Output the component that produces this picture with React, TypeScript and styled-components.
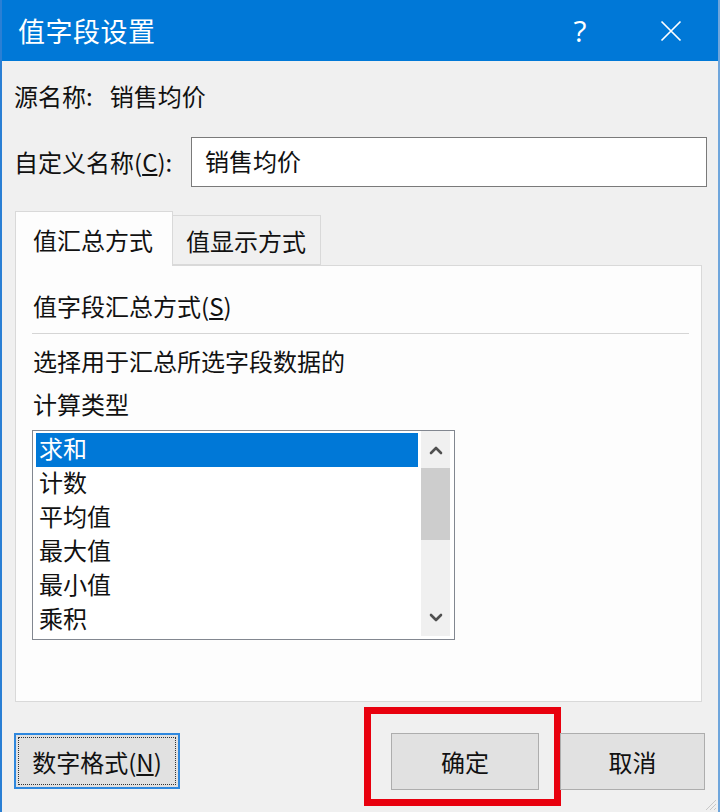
import React from "react";
import styled, { createGlobalStyle } from "styled-components";

const GlobalStyle = createGlobalStyle`
  *, *::before, *::after { box-sizing: border-box; }
  html, body { margin: 0; padding: 0; background: #f0f0f0; }
  body {
    font-family: "Noto Sans CJK SC", "Microsoft YaHei", "Noto Sans", sans-serif;
    color: #111111;
  }
`;

const Window = styled.div`
  position: relative;
  width: 720px;
  height: 812px;
  display: flex;
  flex-direction: column;
  background: #f0f0f0;
  border-left: 2px solid #2a7fd4;
  border-right: 2px solid #6fa6dc;
  overflow: hidden;
`;

const TitleBar = styled.div`
  height: 61px;
  flex: none;
  display: flex;
  align-items: center;
  justify-content: space-between;
  background: #0078d7;
  color: #ffffff;
  padding: 0 27px 0 16px;
`;

const Title = styled.div`
  font-size: 27px;
  line-height: 61px;
  letter-spacing: 0.5px;
`;

const TitleControls = styled.div`
  display: flex;
  align-items: center;
  gap: 51px;
`;

const TitleButton = styled.div`
  width: 40px;
  height: 40px;
  display: flex;
  align-items: center;
  justify-content: center;
  font-family: "Open Sans", "Liberation Sans", sans-serif;
  font-weight: 400;
  font-size: 30px;
  color: #ffffff;
`;

const Body = styled.div`
  flex: 1;
  display: flex;
  flex-direction: column;
  padding: 20px 11px 0 12px;
`;

const Text = styled.div`
  font-size: 24px;
  line-height: 30px;
  white-space: nowrap;
`;

const SourceRow = styled(Text)`
  display: flex;
  align-items: center;
`;

const SourceValue = styled.span`
  margin-left: 17px;
`;

const FieldRow = styled.div`
  margin-top: 26px;
  display: grid;
  grid-template-columns: 177px 1fr;
  align-items: center;
`;

const TextInput = styled.div`
  height: 50px;
  border: 1px solid #7a7a7a;
  background: #ffffff;
  font-size: 24px;
  line-height: 46px;
  padding-left: 13px;
`;

const TabStrip = styled.div`
  margin-top: 24px;
  margin-left: 1px;
  display: flex;
  align-items: flex-end;
  height: 54px;
`;

const Tab = styled.div<{ $active?: boolean }>`
  position: relative;
  z-index: ${(p) => (p.$active ? 1 : 0)};
  display: flex;
  align-items: center;
  font-size: 24px;
  white-space: nowrap;
  border: 1px solid #d9d9d9;
  border-bottom: ${(p) => (p.$active ? "none" : "1px solid #d9d9d9")};
  border-left: ${(p) => (p.$active ? "1px solid #d9d9d9" : "none")};
  background: ${(p) => (p.$active ? "#fdfdfd" : "#f0f0f0")};
  width: ${(p) => (p.$active ? "158px" : "148px")};
  height: ${(p) => (p.$active ? "55px" : "50px")};
  margin-bottom: ${(p) => (p.$active ? "-1px" : "0")};
  padding: ${(p) => (p.$active ? "1px 0 0 17px" : "0 0 0 13px")};
`;

const Panel = styled.div`
  margin-left: 1px;
  margin-right: 5px;
  height: 437px;
  border: 1px solid #d9d9d9;
  background: #fdfdfd;
  padding: 25px 12px 0 16px;
  display: flex;
  flex-direction: column;
`;

const SectionTitle = styled(Text)`
  padding-left: 1px;
`;

const Separator = styled.div`
  margin-top: 12px;
  height: 1px;
  background: #d5d5d5;
`;

const Description = styled.div`
  margin-top: 5px;
  padding-left: 1px;
  font-size: 24px;
  line-height: 43px;
  max-width: 322px;
`;

const ListBox = styled.div`
  margin-top: 5px;
  width: 423px;
  height: 210px;
  border: 1px solid #828790;
  background: #ffffff;
  padding: 2px 4px 2px 3px;
  display: flex;
  gap: 3px;
`;

const ListItems = styled.div`
  flex: 1;
  display: flex;
  flex-direction: column;
`;

const ListItem = styled.div<{ $selected?: boolean }>`
  height: 34px;
  line-height: 29px;
  font-size: 24px;
  padding-left: 3px;
  background: ${(p) => (p.$selected ? "#0078d7" : "transparent")};
  color: ${(p) => (p.$selected ? "#ffffff" : "#111111")};
`;

const ScrollBar = styled.div`
  width: 29px;
  margin-top: -2px;
  margin-bottom: 1px;
  background: #f0f0f0;
  display: flex;
  flex-direction: column;
`;

const ScrollArrow = styled.div`
  height: 37px;
  display: flex;
  align-items: center;
  justify-content: center;
`;

const ScrollThumb = styled.div`
  height: 72px;
  background: #cdcdcd;
`;

const ScrollTrack = styled.div`
  flex: 1;
`;

const Footer = styled.div`
  margin-top: 31px;
  padding-right: 2px;
  display: flex;
  align-items: flex-start;
`;

const Button = styled.div<{ $width: number; $default?: boolean }>`
  position: relative;
  width: ${(p) => p.$width}px;
  height: ${(p) => (p.$default ? "56px" : "57px")};
  display: flex;
  align-items: center;
  justify-content: center;
  font-size: 24px;
  background: #e1e1e1;
  border: ${(p) => (p.$default ? "2px solid #2f88de" : "1px solid #adadad")};
  white-space: nowrap;
  ${(p) =>
    p.$default &&
    `
    &::after {
      content: "";
      position: absolute;
      inset: 2px;
      border: 1px dotted #333333;
    }
  `}
`;

const ButtonGroup = styled.div`
  margin-left: auto;
  display: flex;
  gap: 21px;
`;

const Highlighted = styled.div`
  position: relative;
`;

const RedMark = styled.div`
  position: absolute;
  top: -26px;
  left: -27px;
  right: -22px;
  bottom: -16px;
  border: 7px solid #e8000e;
  pointer-events: none;
`;

const Grip = styled.svg`
  position: absolute;
  right: 1px;
  bottom: 1px;
`;

const Chevron = ({ up }: { up?: boolean }) => (
  <svg width="14" height="10" viewBox="0 0 14 10">
    <path
      d={up ? "M2 8 L7 3 L12 8" : "M2 2 L7 7 L12 2"}
      fill="none"
      stroke="#505050"
      strokeWidth="2.6"
      strokeLinecap="round"
      strokeLinejoin="round"
    />
  </svg>
);

const items = ["求和", "计数", "平均值", "最大值", "最小值", "乘积"];

export default function App() {
  return (
    <>
      <GlobalStyle />
      <Window>
        <TitleBar>
          <Title>值字段设置</Title>
          <TitleControls>
            <TitleButton>?</TitleButton>
            <TitleButton>
              <svg width="22" height="22" viewBox="0 0 22 22">
                <path d="M1.5 1.5 L20.5 20.5 M20.5 1.5 L1.5 20.5" stroke="#ffffff" strokeWidth="1.7" />
              </svg>
            </TitleButton>
          </TitleControls>
        </TitleBar>
        <Body>
          <SourceRow>
            <span>源名称:</span>
            <SourceValue>销售均价</SourceValue>
          </SourceRow>
          <FieldRow>
            <Text>
              自定义名称(<u>C</u>):
            </Text>
            <TextInput>销售均价</TextInput>
          </FieldRow>
          <TabStrip>
            <Tab $active>值汇总方式</Tab>
            <Tab>值显示方式</Tab>
          </TabStrip>
          <Panel>
            <SectionTitle>
              值字段汇总方式(<u>S</u>)
            </SectionTitle>
            <Separator />
            <Description>选择用于汇总所选字段数据的计算类型</Description>
            <ListBox>
              <ListItems>
                {items.map((it, i) => (
                  <ListItem key={it} $selected={i === 0}>
                    {it}
                  </ListItem>
                ))}
              </ListItems>
              <ScrollBar>
                <ScrollArrow>
                  <Chevron up />
                </ScrollArrow>
                <ScrollThumb />
                <ScrollTrack />
                <ScrollArrow>
                  <Chevron />
                </ScrollArrow>
              </ScrollBar>
            </ListBox>
          </Panel>
          <Footer>
            <Button $width={166} $default>
              数字格式(<u>N</u>)
            </Button>
            <ButtonGroup>
              <Highlighted>
                <Button $width={148}>确定</Button>
                <RedMark />
              </Highlighted>
              <Button $width={145}>取消</Button>
            </ButtonGroup>
          </Footer>
        </Body>
        <Grip width="14" height="14" viewBox="0 0 14 14">
          <path d="M13 3 L3 13 M13 7 L7 13 M13 11 L11 13" stroke="#c8c8c8" strokeWidth="1" />
        </Grip>
      </Window>
    </>
  );
}
